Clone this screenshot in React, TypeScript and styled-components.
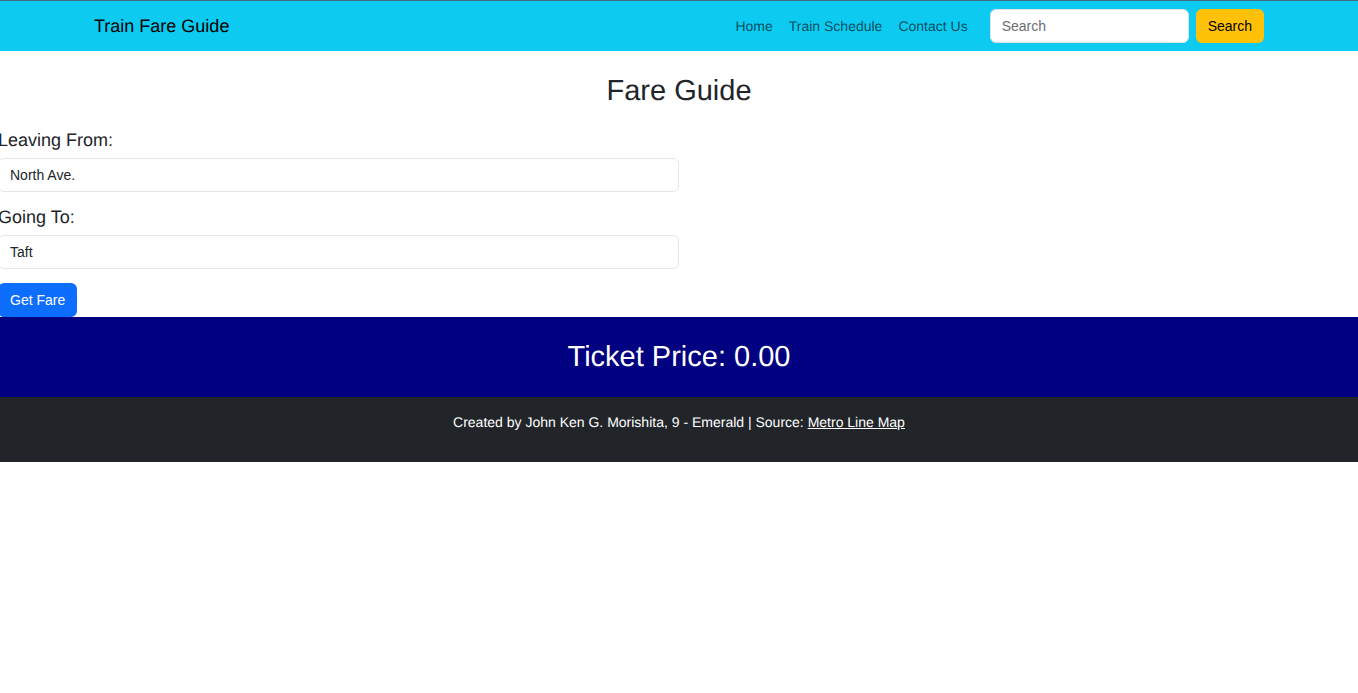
import React from "react";
import styled, { createGlobalStyle } from "styled-components";

const GlobalStyle = createGlobalStyle`
  *, *::before, *::after { box-sizing: border-box; }
  body {
    margin: 0;
    background: #fff;
    color: #212529;
    font: 400 14px/24px "Liberation Sans", Arial, sans-serif;
    text-rendering: geometricPrecision;
    overflow-x: hidden;
  }
`;

const Navbar = styled.nav`
  background: #0dcaf0;
  border-top: 1px solid #456b7b;
  padding: 8px 0;
`;

const NavInner = styled.div`
  display: flex;
  align-items: center;
  max-width: 1170px;
  margin: 0 auto;
`;

const Brand = styled.a`
  margin-right: auto;
  color: #000;
  font-size: 18px;
  text-decoration: none;
`;

const NavList = styled.ul`
  display: flex;
  gap: 16px;
  margin: 0 22px 0 0;
  padding: 0;
  list-style: none;
`;

const NavLink = styled.a`
  color: rgba(0, 0, 0, 0.65);
  text-decoration: none;
`;

const SearchForm = styled.form`
  display: flex;
  gap: 7px;
`;

const SearchInput = styled.input`
  width: 199px;
  height: 34px;
  padding: 0 11px;
  border: 1px solid #dee2e6;
  border-radius: 6px;
  background: #fff;
  color: #212529;
  font: inherit;
  &::placeholder { color: #6b6e71; opacity: 1; }
`;

const Button = styled.button<{ $tone: "warning" | "primary" }>`
  height: 34px;
  padding: 0 12px;
  border: 0;
  border-radius: 6px;
  background: ${(p) => (p.$tone === "warning" ? "#ffc107" : "#0d6efd")};
  color: ${(p) => (p.$tone === "warning" ? "#000" : "#fff")};
  font: inherit;
  cursor: pointer;
`;

const Title = styled.h2`
  margin: 0;
  font-size: 29px;
  line-height: 36px;
  font-weight: 400;
  text-align: center;
`;

const Main = styled.main`
  padding-top: 22px;
`;

const FareForm = styled.form`
  display: flex;
  flex-direction: column;
  align-items: flex-start;
  gap: 14px;
  margin: 20px -2px 0;
`;

const Field = styled.div`
  display: flex;
  flex-direction: column;
  gap: 7px;
  width: 50%;
`;

const Label = styled.label`
  font-size: 18px;
  line-height: 22px;
`;

const Select = styled.select`
  appearance: none;
  width: 100%;
  height: 34px;
  padding: 0 11px;
  border: 1px solid #e3e6e9;
  border-radius: 6px;
  background: #fff;
  color: #212529;
  font: inherit;
`;

const Price = styled.section`
  padding: 22px 0;
  background: #000080;
  color: #fff;
`;

const Footer = styled.footer`
  padding: 13px 0 28px;
  background: #212529;
  color: #fff;
  text-align: center;
`;

const SourceLink = styled.a`
  color: #fff;
`;

const links = ["Home", "Train Schedule", "Contact Us"];
const stations = ["North Ave.", "Quezon Ave.", "Cubao", "Ortigas", "Shaw Blvd.", "Ayala", "Taft"];

function StationField({ id, label, initial }: { id: string; label: string; initial: string }) {
  return (
    <Field>
      <Label htmlFor={id}>{label}</Label>
      <Select id={id} defaultValue={initial}>
        {stations.map((s) => (
          <option key={s}>{s}</option>
        ))}
      </Select>
    </Field>
  );
}

export default function App() {
  return (
    <>
      <GlobalStyle />
      <Navbar>
        <NavInner>
          <Brand href="#">Train Fare Guide</Brand>
          <NavList>
            {links.map((l) => (
              <li key={l}>
                <NavLink href="#">{l}</NavLink>
              </li>
            ))}
          </NavList>
          <SearchForm role="search" onSubmit={(e) => e.preventDefault()}>
            <SearchInput type="search" placeholder="Search" aria-label="Search" />
            <Button $tone="warning" type="submit">Search</Button>
          </SearchForm>
        </NavInner>
      </Navbar>
      <Main>
        <Title>Fare Guide</Title>
        <FareForm onSubmit={(e) => e.preventDefault()}>
          <StationField id="from" label="Leaving From:" initial="North Ave." />
          <StationField id="to" label="Going To:" initial="Taft" />
          <Button $tone="primary" type="submit">Get Fare</Button>
        </FareForm>
      </Main>
      <Price>
        <Title>Ticket Price: 0.00</Title>
      </Price>
      <Footer>
        Created by John Ken G. Morishita, 9 - Emerald | Source:{" "}
        <SourceLink href="#">Metro Line Map</SourceLink>
      </Footer>
    </>
  );
}
